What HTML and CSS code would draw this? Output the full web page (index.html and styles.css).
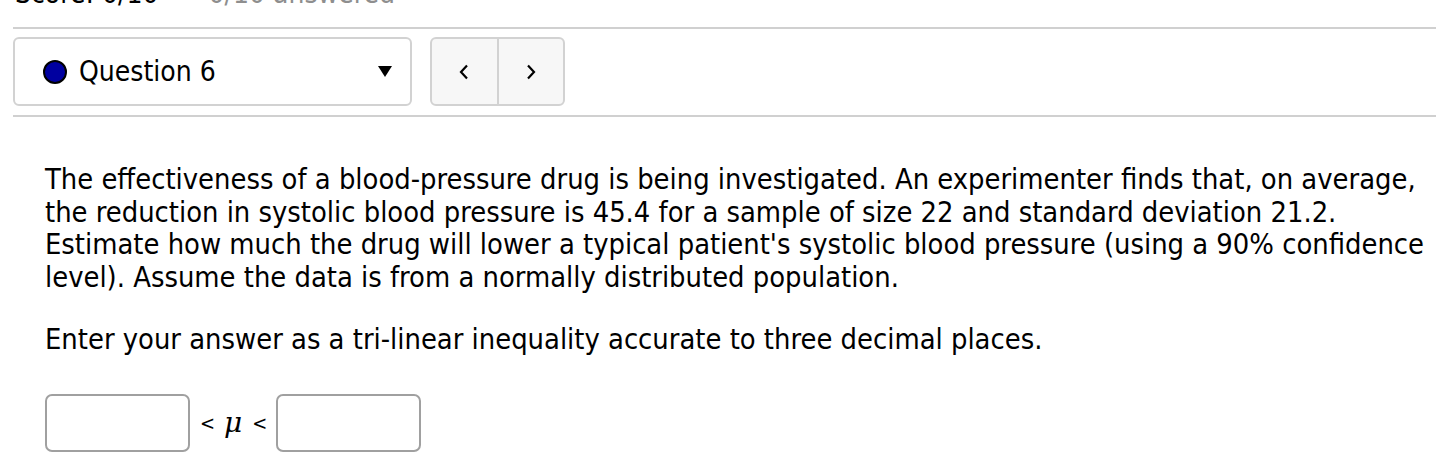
FILE: index.html
```html
<!DOCTYPE html>
<html>
<head>
<meta charset="utf-8">
<link rel="stylesheet" href="styles.css">
</head>
<body>
<div class="header">
  <div class="score"><span class="score-main">Score: 0/10</span><span class="score-ans">0/10 answered</span></div>
  <div class="rule"></div>
  <div class="toolbar">
    <div class="qselect">
      <span class="dot"></span>
      <span class="qlabel">Question 6</span>
      <span class="caret"></span>
    </div>
    <div class="nav">
      <button class="navbtn" aria-label="Previous">
        <svg width="12" height="18" viewBox="0 0 12 18"><path d="M9 2.5 L3 9 L9 15.5" fill="none" stroke="#000" stroke-width="2.2"/></svg>
      </button>
      <button class="navbtn" aria-label="Next">
        <svg width="12" height="18" viewBox="0 0 12 18"><path d="M3 2.5 L9 9 L3 15.5" fill="none" stroke="#000" stroke-width="2.2"/></svg>
      </button>
    </div>
  </div>
  <div class="rule rule2"></div>
</div>
<div class="question">
  <p class="text">The effectiveness of a blood-pressure drug is being investigated. An experimenter finds that, on average, the reduction in systolic blood pressure is 45.4 for a sample of size 22 and standard deviation 21.2. Estimate how much the drug will lower a typical patient's systolic blood pressure (using a 90% confidence level). Assume the data is from a normally distributed population.</p>
  <p class="text instr">Enter your answer as a tri-linear inequality accurate to three decimal places.</p>
  <div class="answer">
    <input class="ans" type="text">
    <span class="ineq">&lt;</span>
    <span class="mu">μ</span>
    <span class="ineq ineq2">&lt;</span>
    <input class="ans" type="text">
  </div>
</div>
</body>
</html>
```
FILE: styles.css
```css
html, body {
  margin: 0;
  padding: 0;
  background: #fff;
}
body {
  font-family: "DejaVu Sans Condensed", "DejaVu Sans", sans-serif;
  font-size: 28.8px;
  color: #000;
  overflow: hidden;
}
.header {
  padding-left: 13px;
}
.score {
  margin-top: -18px;
  font-size: 28px;
  line-height: 24px;
  height: 24px;
  padding-left: 2px;
  white-space: nowrap;
}
.score-main {
  color: #000;
}
.score-ans {
  color: #8e8e8e;
  margin-left: 50px;
}
.rule {
  border-top: 2px solid #d0d0d0;
  margin-top: 21px;
}
.toolbar {
  display: flex;
  gap: 18px;
  margin-top: 8px;
}
.qselect {
  box-sizing: border-box;
  width: 399px;
  height: 69px;
  border: 2px solid #d2d2d2;
  border-radius: 6px;
  background: #fff;
  display: flex;
  align-items: center;
  padding-left: 28px;
  padding-right: 18px;
}
.dot {
  box-sizing: border-box;
  width: 24px;
  height: 24px;
  border-radius: 50%;
  background: #0000a0;
  border: 2px solid #000;
  flex: none;
}
.qlabel {
  margin-left: 12px;
  flex: 1;
  font-size: 28px;
  line-height: 32px;
}
.caret {
  width: 0;
  height: 0;
  border-left: 7.5px solid transparent;
  border-right: 7.5px solid transparent;
  border-top: 11px solid #000;
}
.nav {
  box-sizing: border-box;
  display: flex;
  height: 69px;
  width: 135px;
  border: 2px solid #d2d2d2;
  border-radius: 6px;
  background: #f7f7f7;
  overflow: hidden;
}
.navbtn {
  flex: 1;
  border: none;
  background: transparent;
  padding: 0;
  margin: 0;
  display: flex;
  align-items: center;
  justify-content: center;
}
.navbtn + .navbtn {
  border-left: 2px solid #d2d2d2;
}
.rule2 {
  margin-top: 9px;
}
.question {
  padding-left: 45px;
  padding-top: 46px;
}
.text {
  margin: 0;
  line-height: 32.5px;
  width: 1391px;
}
.instr {
  margin-top: 30px;
}
.answer {
  display: flex;
  align-items: center;
  margin-top: 38px;
}
.ans {
  box-sizing: border-box;
  width: 145px;
  height: 58px;
  border: 2px solid #a0a0a0;
  border-radius: 7px;
  background: #fff;
  margin: 0;
  padding: 0 8px;
  font-family: inherit;
  font-size: 24px;
}
.ineq {
  font-size: 20px;
  margin: 0 9px 0 10px;
}
.mu {
  font-family: "DejaVu Serif", serif;
  font-style: italic;
  font-size: 28px;
}
.ineq2 {
  margin: 0 9px 0 10px;
}
```
